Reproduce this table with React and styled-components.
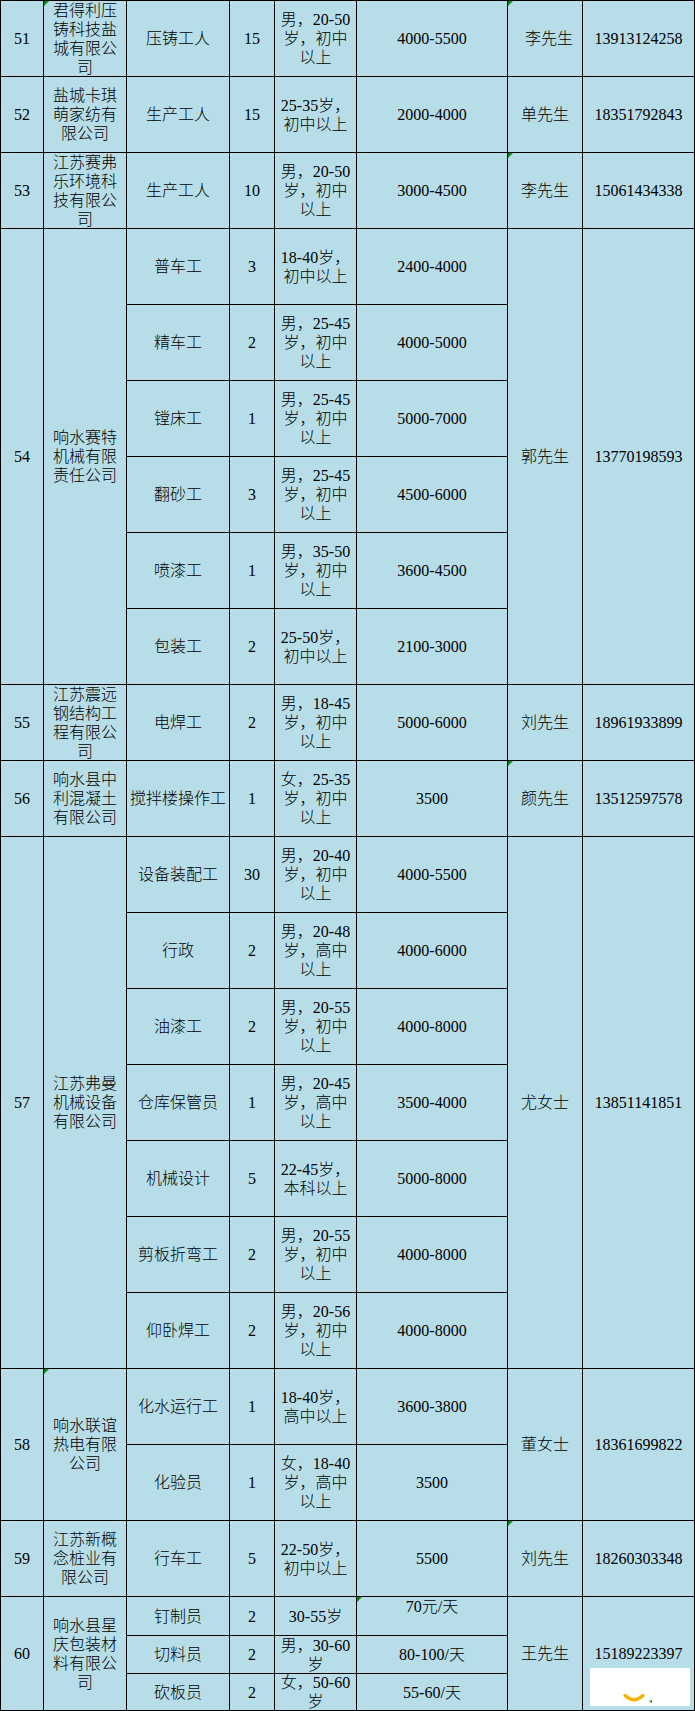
import React from 'react';
import styled, { createGlobalStyle, css } from 'styled-components';

const GlobalStyle = createGlobalStyle`
  html, body { margin: 0; padding: 0; background: #ffffff; }
  body { font-family: "Liberation Serif", "Noto Sans CJK SC", serif; }
`;

const Page = styled.div`
  position: relative;
  width: 695px;
`;

const Sheet = styled.div`
  width: 695px;
  box-sizing: border-box;
  display: grid;
  grid-template-columns: 42px 82px 102px 44px 81px 150px 74px 111px;
  grid-template-rows: repeat(21, 75px) 38px 37px 36px;
  gap: 1px;
  padding: 1px;
  background: #000000;
  font-family: "Liberation Serif", "Noto Sans CJK SC", serif;
  font-weight: 300;
  font-size: 16px;
  color: #000000;
`;

const Cell = styled.div`
  grid-column: ${p => p.$col};
  grid-row: ${p => p.$row} / span ${p => p.$span || 1};
  position: relative;
  background: #b7dee8;
  display: flex;
  align-items: ${p => (p.$top ? 'flex-start' : 'center')};
  justify-content: center;
  text-align: center;
  box-sizing: border-box;
  padding: 0 2px 0 ${p => 2 + (p.$indent || 0)}px;
  line-height: 19px;
  overflow: hidden;
  ${p =>
    p.$mark &&
    css`
      &::before {
        content: '';
        position: absolute;
        left: 0;
        top: 0;
        width: 0;
        height: 0;
        border-top: 5px solid #0a8a0a;
        border-right: 5px solid transparent;
      }
    `}
`;

const Badge = styled.div`
  position: absolute;
  left: 590px;
  top: 1668px;
  width: 100px;
  height: 38px;
  background: #ffffff;
`;

const BadgeArt = styled.svg`
  display: block;
`;

const companies = [
  {
    no: 51, name: '君得利压铸科技盐城有限公司', markName: true,
    contact: '李先生', markContact: true, indent: 8, phone: '13913124258',
    jobs: [{ job: '压铸工人', n: '15', req: '男，20-50岁，初中以上', pay: '4000-5500' }],
  },
  {
    no: 52, name: '盐城卡琪萌家纺有限公司', contact: '单先生', phone: '18351792843',
    jobs: [{ job: '生产工人', n: '15', req: '25-35岁，初中以上', pay: '2000-4000' }],
  },
  {
    no: 53, name: '江苏赛弗乐环境科技有限公司', contact: '李先生', markContact: true, phone: '15061434338',
    jobs: [{ job: '生产工人', n: '10', req: '男，20-50岁，初中以上', pay: '3000-4500' }],
  },
  {
    no: 54, name: '响水赛特机械有限责任公司', contact: '郭先生', phone: '13770198593',
    jobs: [
      { job: '普车工', n: '3', req: '18-40岁，初中以上', pay: '2400-4000' },
      { job: '精车工', n: '2', req: '男，25-45岁，初中以上', pay: '4000-5000' },
      { job: '镗床工', n: '1', req: '男，25-45岁，初中以上', pay: '5000-7000' },
      { job: '翻砂工', n: '3', req: '男，25-45岁，初中以上', pay: '4500-6000' },
      { job: '喷漆工', n: '1', req: '男，35-50岁，初中以上', pay: '3600-4500' },
      { job: '包装工', n: '2', req: '25-50岁，初中以上', pay: '2100-3000' },
    ],
  },
  {
    no: 55, name: '江苏震远钢结构工程有限公司', contact: '刘先生', phone: '18961933899',
    jobs: [{ job: '电焊工', n: '2', req: '男，18-45岁，初中以上', pay: '5000-6000' }],
  },
  {
    no: 56, name: '响水县中利混凝土有限公司', contact: '颜先生', markContact: true, phone: '13512597578',
    jobs: [{ job: '搅拌楼操作工', n: '1', req: '女，25-35岁，初中以上', pay: '3500' }],
  },
  {
    no: 57, name: '江苏弗曼机械设备有限公司', contact: '尤女士', phone: '13851141851',
    jobs: [
      { job: '设备装配工', n: '30', req: '男，20-40岁，初中以上', pay: '4000-5500' },
      { job: '行政', n: '2', req: '男，20-48岁，高中以上', pay: '4000-6000' },
      { job: '油漆工', n: '2', req: '男，20-55岁，初中以上', pay: '4000-8000' },
      { job: '仓库保管员', n: '1', req: '男，20-45岁，高中以上', pay: '3500-4000' },
      { job: '机械设计', n: '5', req: '22-45岁，本科以上', pay: '5000-8000' },
      { job: '剪板折弯工', n: '2', req: '男，20-55岁，初中以上', pay: '4000-8000' },
      { job: '仰卧焊工', n: '2', req: '男，20-56岁，初中以上', pay: '4000-8000' },
    ],
  },
  {
    no: 58, name: '响水联谊热电有限公司', markName: true, contact: '董女士', phone: '18361699822',
    jobs: [
      { job: '化水运行工', n: '1', req: '18-40岁，高中以上', pay: '3600-3800' },
      { job: '化验员', n: '1', req: '女，18-40岁，高中以上', pay: '3500' },
    ],
  },
  {
    no: 59, name: '江苏新概念桩业有限公司', contact: '刘先生', markContact: true, phone: '18260303348',
    jobs: [{ job: '行车工', n: '5', req: '22-50岁，初中以上', pay: '5500' }],
  },
  {
    no: 60, name: '响水县星庆包装材料有限公司', contact: '王先生', phone: '15189223397',
    jobs: [
      { job: '钉制员', n: '2', req: '30-55岁', pay: '70元/天', markPay: true, payTop: true },
      { job: '切料员', n: '2', req: '男，30-60岁', pay: '80-100/天' },
      { job: '砍板员', n: '2', req: '女，50-60岁', pay: '55-60/天' },
    ],
  },
];

function buildCells() {
  const cells = [];
  let row = 1;
  companies.forEach(c => {
    const span = c.jobs.length;
    cells.push(<Cell key={`${c.no}-no`} $col={1} $row={row} $span={span}>{c.no}</Cell>);
    cells.push(<Cell key={`${c.no}-name`} $col={2} $row={row} $span={span} $mark={c.markName}>{c.name}</Cell>);
    c.jobs.forEach((j, i) => {
      const r = row + i;
      cells.push(<Cell key={`${c.no}-${i}-job`} $col={3} $row={r}>{j.job}</Cell>);
      cells.push(<Cell key={`${c.no}-${i}-n`} $col={4} $row={r}>{j.n}</Cell>);
      cells.push(<Cell key={`${c.no}-${i}-req`} $col={5} $row={r}>{j.req}</Cell>);
      cells.push(<Cell key={`${c.no}-${i}-pay`} $col={6} $row={r} $mark={j.markPay} $top={j.payTop}>{j.pay}</Cell>);
    });
    cells.push(<Cell key={`${c.no}-contact`} $col={7} $row={row} $span={span} $mark={c.markContact} $indent={c.indent}>{c.contact}</Cell>);
    cells.push(<Cell key={`${c.no}-phone`} $col={8} $row={row} $span={span}>{c.phone}</Cell>);
    row += span;
  });
  return cells;
}

export default function App() {
  return (
    <>
      <GlobalStyle />
      <Page>
        <Sheet>{buildCells()}</Sheet>
        <Badge>
          <BadgeArt width="100" height="38" viewBox="0 0 100 38">
            <path d="M35 27.5 Q44 36 53 27.5" stroke="#f5b400" strokeWidth="3.2" fill="none" strokeLinecap="round" />
            <path d="M59 33 L62 32 L62 35 Z" fill="#1a8a1a" />
          </BadgeArt>
        </Badge>
      </Page>
    </>
  );
}
